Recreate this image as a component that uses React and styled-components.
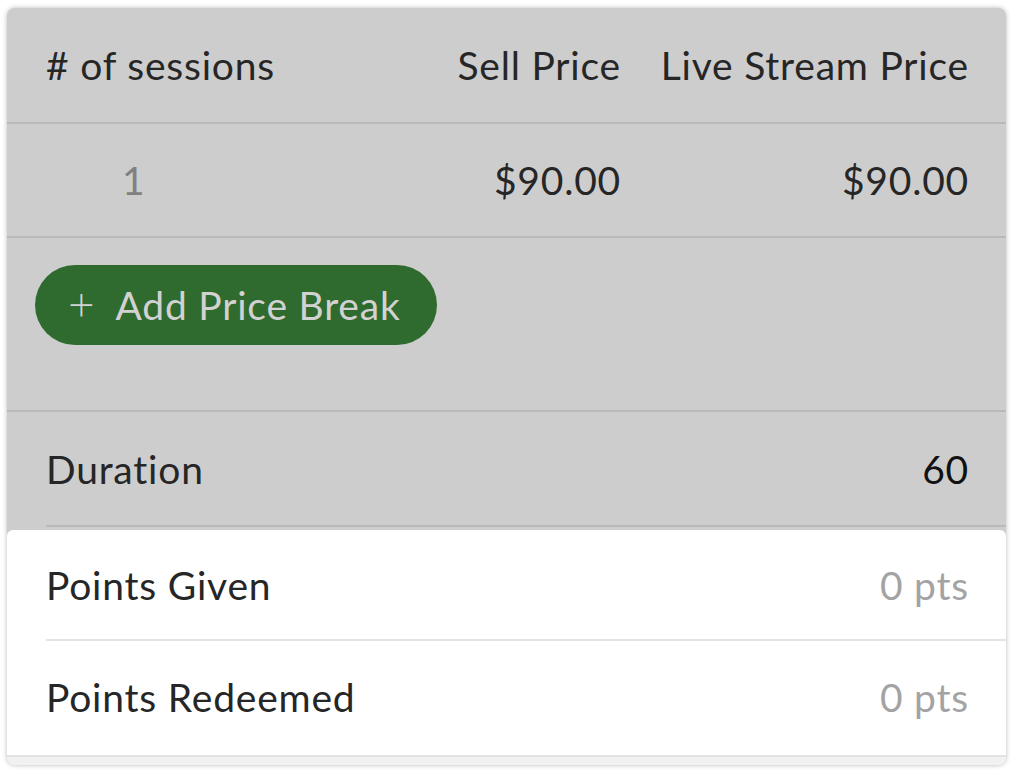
import styled, { createGlobalStyle } from "styled-components";

const GlobalStyle = createGlobalStyle`
  html, body {
    margin: 0;
    padding: 0;
    background: #ffffff;
  }
  body {
    font-family: Lato, "Noto Sans", sans-serif;
  }
`;

const Page = styled.div`
  width: 1015px;
  height: 773px;
  padding: 8px 9px 8px 7px;
  box-sizing: border-box;
`;

const Card = styled.div`
  height: 757px;
  border-radius: 8px;
  overflow: hidden;
  background: #cdcdcd;
  box-shadow: 0 0 5px rgba(0, 0, 0, 0.28);
  display: flex;
  flex-direction: column;
`;

const PriceGrid = styled.div`
  display: grid;
  grid-template-columns: 1fr 180px 348px;
  align-items: center;
  padding: 0 37px 0 39px;
  height: ${(p) => p.$h}px;
  border-bottom: 2px solid #b9b9b9;
  box-sizing: border-box;
`;

const Cell = styled.div`
  font-size: 39px;
  letter-spacing: 0.8px;
  color: ${(p) => p.$muted ? "#808080" : "#262626"};
  text-align: ${(p) => p.$right ? "right" : "left"};
  padding-left: ${(p) => p.$indent || 0}px;
  white-space: nowrap;
`;

const ButtonArea = styled.div`
  height: 174px;
  padding: 27px 0 0 28px;
  box-sizing: border-box;
  border-bottom: 2px solid #b9b9b9;
`;

const AddButton = styled.button`
  height: 80px;
  width: 402px;
  border: none;
  border-radius: 40px;
  background: #2f6b2e;
  color: #d2d2d2;
  font-family: Lato, "Noto Sans", sans-serif;
  font-size: 39px;
  letter-spacing: 0.8px;
  display: flex;
  align-items: center;
  gap: 20px;
  padding: 0 0 0 33px;
  cursor: pointer;
`;

const Plus = styled.span`
  font-size: 46px;
  font-weight: 300;
  line-height: 1;
  margin-top: -4px;
`;

const InfoRow = styled.div`
  height: ${(p) => p.$h}px;
  margin-left: 39px;
  padding-right: 37px;
  display: flex;
  align-items: center;
  justify-content: space-between;
  border-bottom: 2px solid ${(p) => p.$line};
  box-sizing: border-box;
`;

const Label = styled.span`
  font-size: 39px;
  letter-spacing: 0.8px;
  color: #262626;
`;

const Value = styled.span`
  font-size: 39px;
  letter-spacing: 0.8px;
  color: ${(p) => p.$muted ? "#a3a3a3" : "#111111"};
`;

const Sheet = styled.div`
  flex: 1;
  margin-top: 3px;
  background: #ffffff;
  border-radius: 6px 6px 0 0;
  display: flex;
  flex-direction: column;
`;

const SheetFoot = styled.div`
  flex: 1;
  background: #f1f1f1;
  border-top: 2px solid #e2e2e2;
`;

const App = () => {
  return (
    <Page>
      <GlobalStyle />
      <Card>
        <PriceGrid $h={116}>
          <Cell>#&nbsp;of sessions</Cell>
          <Cell $right>Sell Price</Cell>
          <Cell $right>Live Stream Price</Cell>
        </PriceGrid>
        <PriceGrid $h={114}>
          <Cell $muted $indent={76}>1</Cell>
          <Cell $right>$90.00</Cell>
          <Cell $right>$90.00</Cell>
        </PriceGrid>
        <ButtonArea>
          <AddButton>
            <Plus>+</Plus>
            Add Price Break
          </AddButton>
        </ButtonArea>
        <InfoRow $h={115} $line="#b9b9b9">
          <Label>Duration</Label>
          <Value>60</Value>
        </InfoRow>
        <Sheet>
          <InfoRow $h={111} $line="#e4e4e4">
            <Label>Points Given</Label>
            <Value $muted>0 pts</Value>
          </InfoRow>
          <InfoRow $h={114} $line="transparent">
            <Label>Points Redeemed</Label>
            <Value $muted>0 pts</Value>
          </InfoRow>
          <SheetFoot />
        </Sheet>
      </Card>
    </Page>
  );
};

export default App;
